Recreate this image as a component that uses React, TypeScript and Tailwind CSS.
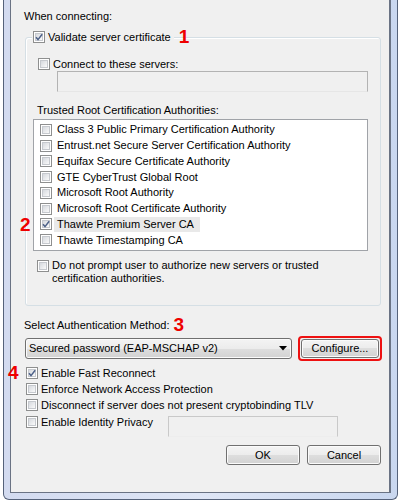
import type { ReactNode } from "react";

const CERTS: [string, boolean][] = [
  ["Class 3 Public Primary Certification Authority", false],
  ["Entrust.net Secure Server Certification Authority", false],
  ["Equifax Secure Certificate Authority", false],
  ["GTE CyberTrust Global Root", false],
  ["Microsoft Root Authority", false],
  ["Microsoft Root Certificate Authority", false],
  ["Thawte Premium Server CA", true],
  ["Thawte Timestamping CA", false],
];

function Check({ checked = false }: { checked?: boolean }) {
  return (
    <span className="relative flex h-[12px] w-[12px] shrink-0 border border-[#8e8f8f] bg-white p-[1px]">
      <span className="block h-full w-full border border-[#c6c9ce] bg-gradient-to-br from-[#d6d9de] to-[#fafafa]" />
      {checked && (
        <svg viewBox="0 0 12 12" className="absolute -left-[1px] -top-[1px] h-[12px] w-[12px]">
          <path d="M3 6.2 L5 8.6 L9.2 3.2" fill="none" stroke="#4d6188" strokeWidth="1.5" />
        </svg>
      )}
    </span>
  );
}

function Button({ children, className }: { children: ReactNode; className: string }) {
  return (
    <div
      className={`flex items-center rounded-[3px] border border-[#707070] bg-[linear-gradient(#f4f4f4,#ececec_50%,#dedede_50%,#d2d2d2)] shadow-[inset_0_0_0_1px_#fbfbfb] ${className}`}
    >
      {children}
    </div>
  );
}

function CheckRow({ label, checked }: { label: string; checked?: boolean }) {
  return (
    <div className="flex h-[16px] items-center gap-[3px]">
      <Check checked={checked} />
      <span className="leading-[14px]">{label}</span>
    </div>
  );
}

export default function App() {
  return (
    <div className="relative h-[501px] w-[400px] overflow-hidden bg-white pl-[3px] font-['Liberation_Sans',Arial,sans-serif] text-[11px] text-black">
      {/* window frame */}
      <div className="flex h-[500px] w-[395px] rounded-b-[6px] border-x border-b border-[#55627a] bg-gradient-to-r from-[#d3dbf0] via-[#dfe6f6] to-[#c9d7ef] px-[6px] pb-[6px]">
        <div className="flex flex-1 flex-col border-l border-r-2 border-b border-[#6a7384] bg-[#f0f0f0]">
          <div className="pl-[13px] pt-[8px] leading-[16px]">When connecting:</div>

          {/* group box */}
          <div className="ml-[14px] mr-[8px] mt-[13px] flex h-[269px] flex-col rounded-[3px] border border-[#d5dfe5] shadow-[inset_1px_1px_0_#ffffff]">
            <div className="-mt-[7px] ml-[6px] flex h-[12px] items-center">
              <div className="flex items-center gap-[3px] bg-[#f0f0f0] px-[1px]">
                <Check checked />
                <span className="pr-[2px] leading-[14px]">Validate server certificate</span>
              </div>
              <span className="ml-[5px] text-[19px] font-bold leading-[12px] text-[#ee0000]">1</span>
            </div>

            <div className="ml-[12px] mt-[14px] flex h-[14px] items-center gap-[3px]">
              <Check />
              <span className="leading-[14px]">Connect to these servers:</span>
            </div>
            <div className="ml-[31px] mr-[12px] h-[21px] border border-[#b3b3b3] border-b-[#e6e6e6] bg-[#f0f0f0]" />

            <div className="ml-[11px] mt-[10px] leading-[16px]">Trusted Root Certification Authorities:</div>
            <div className="ml-[7px] mr-[12px] mt-[1px] flex h-[132px] flex-col border border-[#a0a3a8] bg-white pl-[6px] pt-[2px]">
              {CERTS.map(([name, checked]) => (
                <div key={name} className="flex h-[15.75px] items-center">
                  <Check checked={checked} />
                  <span
                    className={`ml-[2px] px-[3px] leading-[15px] ${checked ? "bg-[#e9e9e9] pr-[6px]" : ""}`}
                  >
                    {name}
                  </span>
                </div>
              ))}
            </div>

            <div className="ml-[11px] mr-[12px] mt-[8px] flex items-start gap-[3px]">
              <span className="mt-[1px]">
                <Check />
              </span>
              <span className="flex-1 leading-[13px]">
                Do not prompt user to authorize new servers or trusted certification authorities.
              </span>
            </div>
          </div>

          <div className="ml-[13px] mt-[11px] flex items-center leading-[16px]">
            <span>Select Authentication Method:</span>
            <span className="ml-[4px] text-[19px] font-bold leading-[16px] text-[#ee0000]">3</span>
          </div>

          <div className="ml-[14px] mt-[3px] flex h-[25px] items-center gap-[6px]">
            <Button className="h-[21px] w-[267px] justify-between pl-[3px] pr-[4px]">
              <span>Secured password (EAP-MSCHAP v2)</span>
              <svg viewBox="0 0 8 5" className="h-[5px] w-[8px]">
                <path d="M0 0 H8 L4 4.5 Z" fill="#000" />
              </svg>
            </Button>
            <div className="h-[25px] w-[84px] rounded-[4px] border-2 border-[#ee1111] p-[1px]">
              <Button className="h-full w-full justify-center">Configure...</Button>
            </div>
          </div>

          <div className="ml-[15px] mt-[4px] flex flex-col">
            <CheckRow label="Enable Fast Reconnect" checked />
            <CheckRow label="Enforce Network Access Protection" />
            <CheckRow label="Disconnect if server does not present cryptobinding TLV" />
            <div className="mt-[1px] flex items-start">
              <div className="w-[142px]">
                <CheckRow label="Enable Identity Privacy" />
              </div>
              <div className="mt-[2px] h-[21px] w-[170px] border border-[#c9c9c9] border-b-[#ededed] bg-[#f0f0f0]" />
            </div>
          </div>

          <div className="mt-[8px] flex justify-end gap-[7px] pr-[8px]">
            <Button className="h-[20px] w-[74px] justify-center">OK</Button>
            <Button className="h-[20px] w-[74px] justify-center">Cancel</Button>
          </div>
        </div>
      </div>

      {/* red annotation numbers laid over the screenshot */}
      <span className="absolute left-[20px] top-[215px] text-[19px] font-bold leading-none text-[#ee0000]">2</span>
      <span className="absolute left-[8px] top-[363px] text-[19px] font-bold leading-none text-[#ee0000]">4</span>
    </div>
  );
}
